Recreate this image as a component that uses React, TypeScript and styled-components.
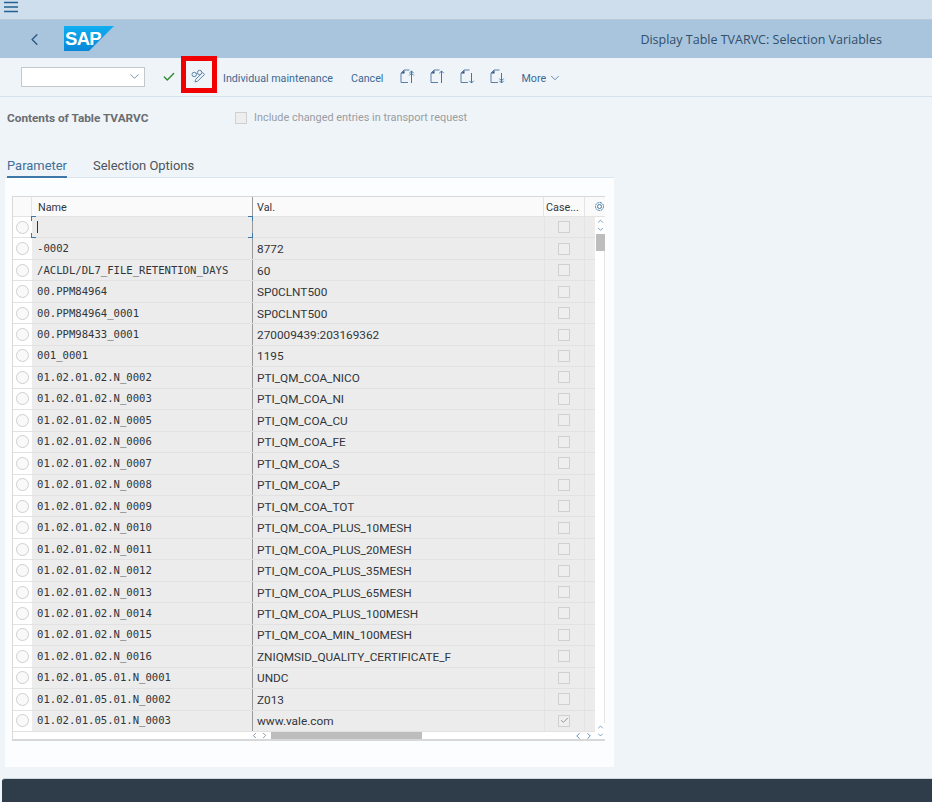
import React from 'react';
import styled, { createGlobalStyle } from 'styled-components';
import { ChevronLeft, ChevronDown, ChevronUp, ChevronRight, Check } from 'lucide-react';

const GlobalStyle = createGlobalStyle`
  html, body { margin: 0; padding: 0; background: #eff4f9; }
  body { font-family: Roboto, "Open Sans", "Liberation Sans", sans-serif; }
`;

const Page = styled.div`
  width: 932px;
  height: 802px;
  overflow: hidden;
  display: flex;
  flex-direction: column;
  background: #eff4f9;
`;

const MenuBar = styled.div`
  height: 20px;
  flex: none;
  box-sizing: border-box;
  padding: 0 0 5px 4px;
  display: flex;
  align-items: center;
  background: #cfdeed;
  color: #22608f;
  border-bottom: 1px solid #b9c9d8;
`;

const Header = styled.div`
  height: 38px;
  flex: none;
  box-sizing: border-box;
  display: flex;
  align-items: center;
  padding: 0 50px 0 25px;
  background: #a9c4dd;
  color: #2f5a85;
`;

const Logo = styled.svg`
  margin-left: 20px;
  margin-top: -1px;
`;

const Title = styled.div`
  margin-left: auto;
  font-family: "Open Sans", sans-serif;
  font-size: 12.5px;
  color: #2f4f6b;
`;

const Toolbar = styled.div`
  position: relative;
  height: 39px;
  flex: none;
  box-sizing: border-box;
  display: flex;
  align-items: center;
  padding: 0 0 1px 21px;
  border-bottom: 1px solid #d5e1ec;
  font-size: 10.7px;
  color: #3b6a94;
`;

const Select = styled.div`
  width: 124px;
  height: 20px;
  box-sizing: border-box;
  display: flex;
  align-items: center;
  justify-content: flex-end;
  padding-right: 2px;
  background: #fff;
  border: 1px solid #c4c8cc;
  color: #5c7f9e;
`;

const ToolIcon = styled.span<{ $left: number }>`
  display: flex;
  margin-left: ${(p) => p.$left}px;
`;

const ToolText = styled.span<{ $left: number }>`
  display: flex;
  align-items: center;
  gap: 2px;
  padding-top: 3px;
  margin-left: ${(p) => p.$left}px;
`;

const Highlight = styled.div`
  position: absolute;
  left: 181px;
  top: -2px;
  width: 36px;
  height: 37px;
  box-sizing: border-box;
  border: 5px solid #f00000;
`;

const Main = styled.div`
  flex: 1;
  display: flex;
  flex-direction: column;
  padding-left: 5px;
`;

const FormRow = styled.div`
  height: 42px;
  display: flex;
  align-items: center;
  padding: 0 0 1px 2px;
  box-sizing: border-box;
`;

const FormLabel = styled.div`
  width: 228px;
  font-size: 11.8px;
  font-weight: 700;
  color: #6a6d70;
`;

const CheckLabel = styled.label`
  display: flex;
  align-items: center;
  gap: 7px;
  font-size: 10.9px;
  color: #9a9da1;
`;

const SmallBox = styled.span`
  width: 12px;
  height: 12px;
  box-sizing: border-box;
  display: flex;
  align-items: center;
  justify-content: center;
  background: #eeeeee;
  border: 1px solid #d0d0d0;
  color: #777;
`;

const Tabs = styled.div`
  height: 39px;
  width: 609px;
  box-sizing: border-box;
  display: flex;
  align-items: flex-end;
  gap: 26px;
  padding-left: 2px;
  border-bottom: 1px solid #dbe5ee;
`;

const Tab = styled.div<{ $active?: boolean }>`
  height: 24px;
  box-sizing: border-box;
  padding-top: 1px;
  font-size: 12.95px;
  line-height: 21px;
  color: ${(p) => (p.$active ? '#3f6f98' : '#4e5358')};
  border-bottom: 2px solid ${(p) => (p.$active ? '#3f78a8' : 'transparent')};
  margin-bottom: -1px;
`;

const Panel = styled.div`
  width: 609px;
  height: 589px;
  box-sizing: border-box;
  padding: 18px 9px 0 7px;
  background: #fcfdfe;
`;

const TableFrame = styled.div`
  height: 545px;
  width: 593px;
  box-sizing: border-box;
  border: 1px solid #d8d8d8;
  border-bottom-width: 2px;
  background: #fff;
  display: grid;
  grid-template-columns: 19px 221px 291px 41px 10px 10px;
  grid-template-rows: 20px 515px 7px;
`;

const HeaderRow = styled.div`
  grid-column: 1 / -1;
  display: grid;
  grid-template-columns: 19px 221px 291px 41px 1fr;
  background: #fafafa;
  border-bottom: 1px solid #e4e4e4;
  font-size: 10.8px;
  color: #32363a;
`;

const HeaderCell = styled.div<{ $strong?: boolean; $pad?: number }>`
  display: flex;
  align-items: center;
  padding-left: ${(p) => p.$pad ?? 6}px;
  padding-top: 1px;
  border-right: 1px solid ${(p) => (p.$strong ? '#9a9a9a' : '#e4e4e4')};
  white-space: nowrap;
  overflow: hidden;
  &:last-child { border-right: none; padding-top: 0; }
`;

const Rows = styled.div`
  grid-column: 1 / 6;
  display: grid;
  grid-template-rows: repeat(24, 1fr);
  height: 515px;
`;

const Row = styled.div`
  display: grid;
  grid-template-columns: 19px 221px 291px 41px 10px;
  background: #ececec;
  border-bottom: 1px solid #e2e2e2;
  box-sizing: border-box;
  min-height: 0;
`;

const RadioCell = styled.div`
  background: #fff;
  display: flex;
  align-items: center;
  justify-content: center;
`;

const Radio = styled.span`
  width: 13px;
  height: 13px;
  box-sizing: border-box;
  border: 1px solid #cfcfcf;
  border-radius: 50%;
  background: #f9f9f9;
`;

const NameCell = styled.div`
  position: relative;
  display: flex;
  align-items: center;
  padding: 0 0 1px 5px;
  font-family: "DejaVu Sans Mono", "Liberation Mono", monospace;
  font-size: 10.6px;
  color: #32363a;
  border-right: 1px solid #9a9a9a;
  white-space: nowrap;
`;

const Caret = styled.span`
  width: 1px;
  height: 12px;
  background: #32363a;
`;

const FocusCorner = styled.span<{ $x: 'left' | 'right'; $y: 'top' | 'bottom' }>`
  position: absolute;
  ${(p) => p.$x}: -1px;
  ${(p) => p.$y}: -1px;
  width: 4px;
  height: 4px;
  border-${(p) => p.$x}: 1px solid #3f78a8;
  border-${(p) => p.$y}: 1px solid #3f78a8;
`;

const ValCell = styled.div`
  display: flex;
  align-items: center;
  padding: 1px 0 0 4px;
  font-size: 11.8px;
  color: #32363a;
  white-space: nowrap;
`;

const CaseCell = styled.div`
  display: flex;
  align-items: center;
  justify-content: center;
  padding-right: 1px;
  border-left: 1px solid #e4e4e4;
  border-right: 1px solid #e4e4e4;
`;

const VScroll = styled.div`
  grid-column: 6;
  grid-row: 2 / 4;
  display: flex;
  flex-direction: column;
  align-items: center;
  background: #fff;
  color: #3f78a8;
`;

const VThumb = styled.div`
  width: 9px;
  height: 17px;
  margin-top: 1px;
  background: #bdbdbd;
`;

const VTrack = styled.div`
  flex: 1;
  width: 100%;
  border-right: 1px solid #e4e4e4;
  box-sizing: border-box;
`;

const Arrows = styled.div`
  display: flex;
  flex-direction: column;
  height: 16px;
  flex: none;
  align-items: center;
  justify-content: center;
`;

const HScroll = styled.div`
  grid-column: 1 / 6;
  display: flex;
  align-items: center;
  background: #fff;
`;

const HPane = styled.div<{ $width: number }>`
  width: ${(p) => p.$width}px;
  height: 100%;
  display: flex;
  align-items: center;
  justify-content: flex-end;
  gap: 1px;
  color: #5c7f9e;
`;

const HThumb = styled.div`
  width: 151px;
  height: 100%;
  background: #bdbdbd;
  margin-left: 2px;
`;

const HEnd = styled.div`
  flex: 1;
  height: 100%;
  display: flex;
  align-items: center;
  justify-content: flex-end;
  gap: 1px;
  padding-right: 1px;
  color: #3f78a8;
`;

const Footer = styled.div`
  height: 23px;
  flex: none;
  margin-left: 2px;
  background: #2f3c49;
  border-top: 1px solid #cfd5da;
  border-radius: 3px 0 0 0;
`;

const TransferIcon: React.FC<{ dir: 'up' | 'down'; double?: boolean }> = ({ dir, double }) => (
  <svg width="15" height="15" viewBox="0 0 15 15" fill="none">
    <path d="M1 13.5V4L4 1H9.5M8 13.5H1" stroke="#5a7fa6" strokeWidth="1" />
    <path d="M1.2 4.5H4.5V1.2Z" fill="#2b4c7a" />
    {dir === 'up' ? (
      <>
        <path d="M11.5 14V2M9.3 4.2L11.5 2L13.7 4.2" stroke="#3f78a8" strokeWidth="1" />
        {double && <path d="M9.3 6.4L11.5 4.2L13.7 6.4" stroke="#3f78a8" strokeWidth="1" />}
      </>
    ) : (
      <>
        <path d="M11.5 4V14M9.3 11.8L11.5 14L13.7 11.8" stroke="#3f78a8" strokeWidth="1" />
        {double && <path d="M9.3 9.6L11.5 11.8L13.7 9.6" stroke="#3f78a8" strokeWidth="1" />}
      </>
    )}
  </svg>
);

const ROWS: [string, string, boolean?][] = [
  ['', ''],
  ['-0002', '8772'],
  ['/ACLDL/DL7_FILE_RETENTION_DAYS', '60'],
  ['00.PPM84964', 'SP0CLNT500'],
  ['00.PPM84964_0001', 'SP0CLNT500'],
  ['00.PPM98433_0001', '270009439:203169362'],
  ['001_0001', '1195'],
  ['01.02.01.02.N_0002', 'PTI_QM_COA_NICO'],
  ['01.02.01.02.N_0003', 'PTI_QM_COA_NI'],
  ['01.02.01.02.N_0005', 'PTI_QM_COA_CU'],
  ['01.02.01.02.N_0006', 'PTI_QM_COA_FE'],
  ['01.02.01.02.N_0007', 'PTI_QM_COA_S'],
  ['01.02.01.02.N_0008', 'PTI_QM_COA_P'],
  ['01.02.01.02.N_0009', 'PTI_QM_COA_TOT'],
  ['01.02.01.02.N_0010', 'PTI_QM_COA_PLUS_10MESH'],
  ['01.02.01.02.N_0011', 'PTI_QM_COA_PLUS_20MESH'],
  ['01.02.01.02.N_0012', 'PTI_QM_COA_PLUS_35MESH'],
  ['01.02.01.02.N_0013', 'PTI_QM_COA_PLUS_65MESH'],
  ['01.02.01.02.N_0014', 'PTI_QM_COA_PLUS_100MESH'],
  ['01.02.01.02.N_0015', 'PTI_QM_COA_MIN_100MESH'],
  ['01.02.01.02.N_0016', 'ZNIQMSID_QUALITY_CERTIFICATE_F'],
  ['01.02.01.05.01.N_0001', 'UNDC'],
  ['01.02.01.05.01.N_0002', 'Z013'],
  ['01.02.01.05.01.N_0003', 'www.vale.com', true],
];

const App: React.FC = () => (
  <Page>
    <GlobalStyle />
    <MenuBar>
      <svg width="14" height="12" viewBox="0 0 14 12" stroke="currentColor" strokeWidth="1.4">
        <path d="M0 1.5H14M0 6H14M0 10.5H14" />
      </svg>
    </MenuBar>
    <Header>
      <ChevronLeft size={19} strokeWidth={1.8} />
      <Logo width="50" height="25" viewBox="0 0 50 25">
        <defs>
          <linearGradient id="sapBlue" x1="0" y1="0" x2="0" y2="1">
            <stop offset="0" stopColor="#10aef0" />
            <stop offset="1" stopColor="#0a86d8" />
          </linearGradient>
        </defs>
        <polygon points="0,0 50,0 25,25 0,25" fill="url(#sapBlue)" />
        <text x="1" y="19" fill="#fff" fontFamily="'Liberation Sans', sans-serif" fontWeight="700" fontSize="18.5" letterSpacing="-0.7">
          SAP
        </text>
      </Logo>
      <Title>Display Table TVARVC: Selection Variables</Title>
    </Header>
    <Toolbar>
      <Select>
        <ChevronDown size={15} strokeWidth={1.3} />
      </Select>
      <ToolIcon $left={17}>
        <Check size={14} strokeWidth={2.4} color="#2f8a2f" />
      </ToolIcon>
      <ToolIcon $left={15}>
        <svg width="15" height="15" viewBox="0 0 15 15" fill="none" stroke="#5b84a8" strokeWidth="1">
          <circle cx="3.2" cy="5.5" r="2.2" />
          <circle cx="8.6" cy="3.5" r="2.2" />
          <path d="M5.2 4.8L6.6 4.2" />
          <path d="M4 13L4.6 10.4L11.6 3.6L13.6 5.4L6.6 12.2Z" fill="#eff4f9" />
        </svg>
      </ToolIcon>
      <ToolText $left={17}>Individual maintenance</ToolText>
      <ToolText $left={18}>Cancel</ToolText>
      <ToolIcon $left={17}>
        <TransferIcon dir="up" double />
      </ToolIcon>
      <ToolIcon $left={15}>
        <TransferIcon dir="up" />
      </ToolIcon>
      <ToolIcon $left={15}>
        <TransferIcon dir="down" />
      </ToolIcon>
      <ToolIcon $left={15}>
        <TransferIcon dir="down" double />
      </ToolIcon>
      <ToolText $left={16}>
        More
        <ChevronDown size={14} strokeWidth={1.3} />
      </ToolText>
      <Highlight />
    </Toolbar>
    <Main>
      <FormRow>
        <FormLabel>Contents of Table TVARVC</FormLabel>
        <CheckLabel>
          <SmallBox />
          Include changed entries in transport request
        </CheckLabel>
      </FormRow>
      <Tabs>
        <Tab $active>Parameter</Tab>
        <Tab>Selection Options</Tab>
      </Tabs>
      <Panel>
        <TableFrame>
          <HeaderRow>
            <HeaderCell />
            <HeaderCell $strong>Name</HeaderCell>
            <HeaderCell $pad={4}>Val.</HeaderCell>
            <HeaderCell $pad={2}>Case...</HeaderCell>
            <HeaderCell $pad={9}>
              <svg width="11" height="11" viewBox="0 0 11 11" fill="none" stroke="#3f78a8" strokeWidth="1">
                <circle cx="5.5" cy="5.5" r="4" strokeDasharray="2 0.7" />
                <circle cx="5.5" cy="5.5" r="2" />
              </svg>
            </HeaderCell>
          </HeaderRow>
          <Rows>
            {ROWS.map(([name, val, checked], i) => (
              <Row key={i}>
                <RadioCell>
                  <Radio />
                </RadioCell>
                <NameCell>
                  {i === 0 ? (
                    <>
                      <Caret />
                      <FocusCorner $x="left" $y="top" />
                      <FocusCorner $x="right" $y="top" />
                      <FocusCorner $x="left" $y="bottom" />
                      <FocusCorner $x="right" $y="bottom" />
                    </>
                  ) : (
                    name
                  )}
                </NameCell>
                <ValCell>{val}</ValCell>
                <CaseCell>
                  <SmallBox>{checked && <Check size={9} strokeWidth={2} />}</SmallBox>
                </CaseCell>
                <div />
              </Row>
            ))}
          </Rows>
          <VScroll>
            <Arrows>
              <ChevronUp size={9} strokeWidth={2} style={{ marginBottom: -1 }} />
              <ChevronDown size={9} strokeWidth={2} />
            </Arrows>
            <VThumb />
            <VTrack />
            <Arrows>
              <ChevronUp size={9} strokeWidth={2} />
              <ChevronDown size={9} strokeWidth={2} />
            </Arrows>
          </VScroll>
          <HScroll>
            <HPane $width={256}>
              <ChevronLeft size={9} strokeWidth={2} />
              <ChevronRight size={9} strokeWidth={2} />
            </HPane>
            <HThumb />
            <HEnd>
              <ChevronLeft size={10} strokeWidth={2} />
              <ChevronRight size={10} strokeWidth={2} />
            </HEnd>
          </HScroll>
        </TableFrame>
      </Panel>
    </Main>
    <Footer />
  </Page>
);

export default App;
